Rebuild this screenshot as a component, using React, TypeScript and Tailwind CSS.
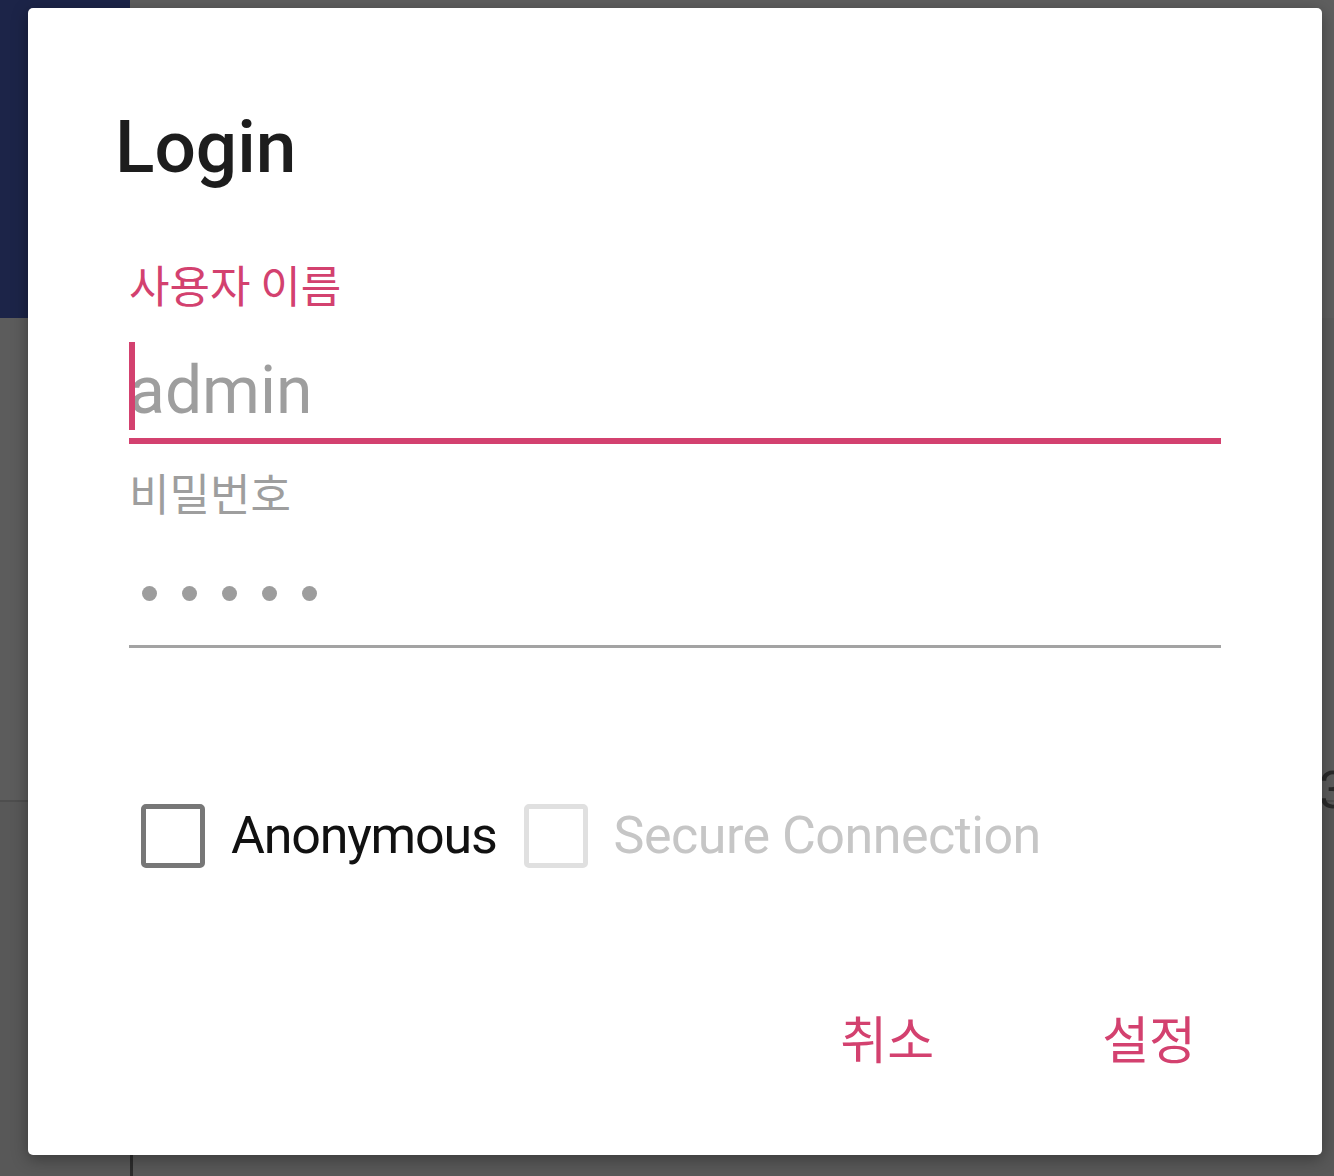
import { useState } from "react";

const PINK = "text-[#d3416f]";

const Checkbox = ({ checked, disabled }: { checked: boolean; disabled?: boolean }) => (
    <div
        className={`w-[64px] h-[64px] rounded-[5px] border-[5px] ${
            disabled ? "border-[#e0e0e0]" : "border-[#777777]"
        } ${checked ? "bg-[#d3416f] border-[#d3416f]" : "bg-white"}`}
    />
);

const LoginDialog = () => {
    const [anonymous, setAnonymous] = useState(false);

    return (
        <div className="absolute left-[28px] top-[8px] w-[1294px] h-[1147px] bg-white rounded-[5px] shadow-[0_4px_16px_rgba(0,0,0,0.35)] flex flex-col">
            {/* Title */}
            <h1 className="pt-[103px] pl-[87px] text-[73px] leading-none font-medium text-[#1d1d1d] font-['Roboto',sans-serif]">
                Login
            </h1>

            <div className="px-[101px] flex flex-col">
                {/* Username */}
                <label className={`mt-[78px] h-[44px] text-[44px] leading-none ${PINK} font-['Noto_Sans_CJK_KR',sans-serif]`}>
                    사용자 이름
                </label>
                <div className="relative mt-[36px] h-[88px]">
                    <span className="absolute left-0 top-0 w-[6px] h-[88px] bg-[#d3416f]" />
                    <div className="pt-[16px] text-[66px] leading-none text-[#9e9e9e] font-['Roboto',sans-serif]">
                        admin
                    </div>
                </div>
                <div className="mt-[8px] h-[6px] bg-[#d3416f]" />

                {/* Password */}
                <label className="mt-[26px] h-[44px] text-[44px] leading-none text-[#9e9e9e] font-['Noto_Sans_CJK_KR',sans-serif]">
                    비밀번호
                </label>
                <div className="mt-[72px] h-[15px] flex gap-[25px] pl-[13px]">
                    {[0, 1, 2, 3, 4].map((i) => (
                        <span key={i} className="w-[15px] h-[15px] rounded-full bg-[#9d9d9d]" />
                    ))}
                </div>
                <div className="mt-[44px] h-[3px] bg-[#a3a3a3]" />

                {/* Options */}
                <div className="mt-[156px] h-[64px] flex items-center pl-[12px] font-['Roboto',sans-serif] text-[52px]">
                    <button onClick={() => setAnonymous(!anonymous)} className="flex items-center">
                        <Checkbox checked={anonymous} />
                        <span className="ml-[26px] tracking-[-1.2px] text-[#111111]">Anonymous</span>
                    </button>
                    <div className="ml-[27px] flex items-center">
                        <Checkbox checked={false} disabled />
                        <span className="ml-[26px] tracking-[-0.5px] text-[#c6c6c6]">Secure Connection</span>
                    </div>
                </div>
            </div>

            {/* Actions */}
            <div className={`mt-[144px] flex justify-end pr-[126px] gap-[168px] text-[51px] leading-none ${PINK} font-['Noto_Sans_CJK_KR',sans-serif]`}>
                <button>취소</button>
                <button>설정</button>
            </div>
        </div>
    );
};

export default function App() {
    return (
        <div className="relative w-[1334px] h-[1176px] overflow-hidden bg-[#5e5e5e]">
            {/* dimmed page behind the dialog */}
            <div className="flex h-[318px]">
                <div className="w-[130px] bg-[#1c2448]" />
                <div className="flex-1 bg-[#5f5f5f]" />
            </div>
            <div className="h-[482px] bg-[#5c5c5c]" />
            <div className="h-[2px] bg-[#4e4e4e]" />
            <div className="h-[374px] bg-[#585858] flex">
                <div className="w-[130px]" />
                <div className="mt-[353px] w-[3px] h-[21px] bg-[#2c2c2c]" />
            </div>
            <span className="absolute right-[-14px] top-[752px] text-[52px] text-[#2a2a2a] font-['Roboto',sans-serif]">3</span>

            <LoginDialog />
        </div>
    );
}
